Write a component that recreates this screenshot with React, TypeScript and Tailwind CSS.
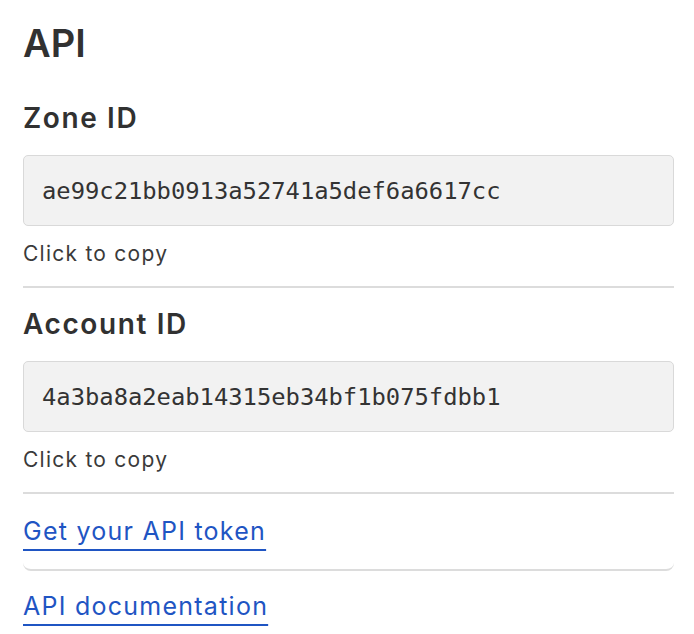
const sans = "font-['Inter','Noto_Sans',sans-serif]";
const mono = "font-['DejaVu_Sans_Mono','Liberation_Mono',monospace]";
const link = `${sans} text-[25px] leading-[29px] tracking-[1.25px] text-[#1f55c3] underline decoration-2 underline-offset-[9px]`;

function IdField({ label, value, first }: { label: string; value: string; first?: boolean }) {
  return (
    <section className={first ? "mt-[35px]" : "mt-[19px]"}>
      <h2 className={`${sans} text-[28px] leading-[34px] font-semibold tracking-[1.6px] text-[#313131]`}>{label}</h2>
      <div className="mt-[20px] h-[71px] flex items-center rounded-[5px] border border-[#d9d9d9] bg-[#f2f2f2] pl-[18px]">
        <span className={`${mono} text-[23.8px] leading-[30px] text-[#333]`}>{value}</span>
      </div>
      <p className={`${sans} mt-[16px] text-[21px] leading-[24px] tracking-[1.25px] text-[#3a3a3a]`}>Click to copy</p>
      <div className="mt-[20px] h-[2px] bg-[#dcdcdc]" />
    </section>
  );
}

export default function App() {
  return (
    <div className="w-[694px] h-[634px] overflow-hidden bg-white pl-[23px] pr-[20px] pt-[20px]">
      <h1 className={`${sans} text-[38px] leading-[46px] font-semibold text-[#313131]`}>API</h1>

      <IdField first label="Zone ID" value="ae99c21bb0913a52741a5def6a6617cc" />
      <IdField label="Account ID" value="4a3ba8a2eab14315eb34bf1b075fdbb1" />

      <div className="pt-[23px] pb-[23px] border-b-2 border-[#dcdcdc] rounded-b-[8px]">
        <a href="#" className={link}>
          Get your API token
        </a>
      </div>

      <div className="mt-[21px]">
        <a href="#" className={link}>
          API documentation
        </a>
      </div>
    </div>
  );
}
